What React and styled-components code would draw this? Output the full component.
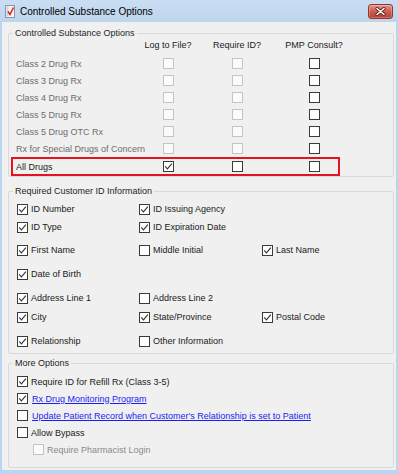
import React from 'react';
import styled, { createGlobalStyle } from 'styled-components';

const GlobalStyle = createGlobalStyle`
  html, body {
    margin: 0;
    padding: 0;
    background: #f0f0f0;
  }
  body {
    font-family: "Liberation Sans", Arial, sans-serif;
    font-size: 9px;
    color: #111;
  }
`;

const Window = styled.div`
  width: 398px;
  height: 474px;
  display: flex;
  flex-direction: column;
  background: #b9d5ef;
  overflow: hidden;
`;

const TitleBar = styled.div`
  flex: none;
  height: 22px;
  display: flex;
  align-items: center;
  padding: 0 5px;
  background: linear-gradient(#cadef3, #bfd5ec);
`;

const TitleText = styled.span`
  margin-left: 5px;
  font-size: 10px;
  color: #000;
`;

const CloseButton = styled.div`
  margin-left: auto;
  width: 25px;
  height: 15px;
  box-sizing: border-box;
  display: flex;
  align-items: center;
  justify-content: center;
  border: 1px solid #94352c;
  border-radius: 3px;
  background: linear-gradient(#e09a8f, #cc5d52 50%, #bb3e33);
  box-shadow: inset 0 0 0 1px rgba(255, 255, 255, 0.25);
`;

const Client = styled.div`
  flex: 1;
  margin: 0 2px 4px 2px;
  padding: 5px 2px 0 6px;
  background: #f0f0f0;
  display: flex;
  flex-direction: column;
`;

const Group = styled.fieldset`
  width: 386px;
  box-sizing: border-box;
  min-width: 0;
  margin: ${props => props.$top}px 0 0 0;
  padding: 0;
  border: 1px solid #d9d9d9;
  border-radius: 2px;
`;

const Legend = styled.legend`
  margin-left: 4px;
  padding: 0 2px;
  line-height: 12px;
  font-size: 9px;
  color: #1e1e1e;
`;

const Row = styled.div`
  display: grid;
  grid-template-columns: 117px 70px 68px 86px;
  align-items: center;
  justify-items: center;
  width: 329px;
  height: ${props => props.$boxed ? 19 : 17}px;
  margin-left: 2px;
  box-sizing: border-box;
  border: 2px solid ${props => props.$boxed ? '#e5131d' : 'transparent'};
  padding-left: 3px;
`;

const HeaderRow = styled(Row)`
  height: 12px;
  border: 0;
  padding-left: 5px;
  margin-bottom: 4px;
`;

const HeaderCell = styled.span`
  white-space: nowrap;
  color: #1a1a1a;
`;

const Label = styled.span`
  justify-self: start;
  white-space: nowrap;
  color: ${props => props.$disabled ? '#6d6d6d' : '#1a1a1a'};
`;

const Box = styled.span`
  flex: none;
  width: 11px;
  height: 11px;
  box-sizing: border-box;
  display: inline-flex;
  align-items: center;
  justify-content: center;
  border: 1px solid ${props => props.$disabled ? '#c4c4c4' : '#3a3a3a'};
  background: ${props => props.$disabled ? '#fbfbfb' : '#fff'};
`;

const IdSection = styled.div`
  padding-bottom: 3px;
`;

const IdRow = styled.div`
  display: grid;
  grid-template-columns: 122px 123px 1fr;
  align-items: center;
  height: 18px;
  margin-top: ${props => props.$top}px;
  padding-left: 8px;
`;

const Item = styled.label`
  display: flex;
  align-items: center;
  gap: 3px;
  white-space: nowrap;
  color: ${props => props.$disabled ? '#8a8a8a' : '#1a1a1a'};
`;

const OptionList = styled.div`
  padding: 4px 0 9px;
`;

const OptionRow = styled(Item)`
  height: 17px;
  padding-left: ${props => props.$indent ? 24 : 8}px;
`;

const Link = styled.a`
  margin-left: 1px;
  color: #1c1cf5;
  text-decoration: underline;
`;

function CheckBox({ checked, disabled }) {
  return (
    <Box $disabled={disabled}>
      {checked && (
        <svg width="9" height="9" viewBox="0 0 9 9">
          <polyline points="1.2,4.4 3.4,6.8 7.9,1.6" fill="none" stroke="#333" strokeWidth="1.1" />
        </svg>
      )}
    </Box>
  );
}

function TitleIcon() {
  return (
    <svg width="10" height="13" viewBox="0 0 10 13">
      <rect x="0.5" y="0.5" width="9" height="12" fill="#f7f3ee" stroke="#8a97b0" />
      <rect x="1.5" y="1.5" width="2" height="10" fill="#c9d3e6" />
      <polyline points="3,6.5 5,9.5 8.5,2.5" fill="none" stroke="#d8262b" strokeWidth="1.6" />
    </svg>
  );
}

const drugs = [
  'Class 2 Drug Rx',
  'Class 3 Drug Rx',
  'Class 4 Drug Rx',
  'Class 5 Drug Rx',
  'Class 5 Drug OTC Rx',
  'Rx for Special Drugs of Concern',
];

const idRows = [
  { top: 3, items: [['ID Number', true], ['ID Issuing Agency', true]] },
  { top: 0, items: [['ID Type', true], ['ID Expiration Date', true]] },
  { top: 5, items: [['First Name', true], ['Middle Initial', false], ['Last Name', true]] },
  { top: 6, items: [['Date of Birth', true]] },
  { top: 6, items: [['Address Line 1', true], ['Address Line 2', false]] },
  { top: 1, items: [['City', true], ['State/Province', true], ['Postal Code', true]] },
  { top: 6, items: [['Relationship', true], ['Other Information', false]] },
];

export default function App() {
  return (
    <Window>
      <GlobalStyle />
      <TitleBar>
        <TitleIcon />
        <TitleText>Controlled Substance Options</TitleText>
        <CloseButton>
          <svg width="11" height="9" viewBox="0 0 11 9">
            <path d="M2 1.5 L9 7.5 M9 1.5 L2 7.5" stroke="#5a1a14" strokeWidth="3" strokeLinecap="round" />
            <path d="M2 1.5 L9 7.5 M9 1.5 L2 7.5" stroke="#fff" strokeWidth="1.6" strokeLinecap="round" />
          </svg>
        </CloseButton>
      </TitleBar>
      <Client>
        <Group $top={0}>
          <Legend>Controlled Substance Options</Legend>
          <HeaderRow>
            <span />
            <HeaderCell>Log to File?</HeaderCell>
            <HeaderCell>Require ID?</HeaderCell>
            <HeaderCell>PMP Consult?</HeaderCell>
          </HeaderRow>
          {drugs.map(name => (
            <Row key={name}>
              <Label $disabled>{name}</Label>
              <CheckBox disabled />
              <CheckBox disabled />
              <CheckBox />
            </Row>
          ))}
          <Row $boxed>
            <Label>All Drugs</Label>
            <CheckBox checked />
            <CheckBox />
            <CheckBox />
          </Row>
        </Group>

        <Group $top={8}>
          <Legend>Required Customer ID Information</Legend>
          <IdSection>
            {idRows.map((row, i) => (
              <IdRow key={i} $top={row.top}>
                {row.items.map(([text, checked]) => (
                  <Item key={text}>
                    <CheckBox checked={checked} />
                    {text}
                  </Item>
                ))}
              </IdRow>
            ))}
          </IdSection>
        </Group>

        <Group $top={3}>
          <Legend>More Options</Legend>
          <OptionList>
            <OptionRow>
              <CheckBox checked />
              Require ID for Refill Rx (Class 3-5)
            </OptionRow>
            <OptionRow>
              <CheckBox checked />
              <Link href="#">Rx Drug Monitoring Program</Link>
            </OptionRow>
            <OptionRow>
              <CheckBox />
              <Link href="#">Update Patient Record when Customer's Relationship is set to Patient</Link>
            </OptionRow>
            <OptionRow>
              <CheckBox />
              Allow Bypass
            </OptionRow>
            <OptionRow $indent $disabled>
              <CheckBox disabled />
              Require Pharmacist Login
            </OptionRow>
          </OptionList>
        </Group>
      </Client>
    </Window>
  );
}
